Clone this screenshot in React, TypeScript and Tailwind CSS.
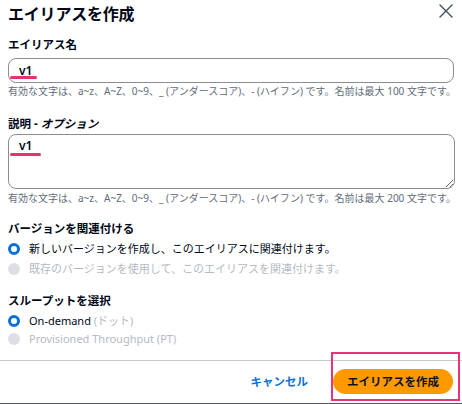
import { X } from "lucide-react";

const font = { fontFamily: '"Noto Sans", "Noto Sans CJK JP", sans-serif' };

function Radio({ checked, disabled }: { checked?: boolean; disabled?: boolean }) {
  if (checked) {
    return <span className="w-[12px] h-[12px] rounded-full border-[3.5px] border-[#0972d3] bg-white shrink-0" />;
  }
  return <span className={`w-[12px] h-[12px] rounded-full shrink-0 ${disabled ? "bg-[#dcdfe4]" : "border border-[#8c8c94]"}`} />;
}

export default function App() {
  return (
    <div
      className="relative w-[462px] h-[404px] bg-white overflow-hidden text-[#000716] border-b border-[#545b64]"
      style={font}
    >
      {/* header */}
      <div className="flex items-start justify-between pl-2 pr-[4px] pt-[4px] h-[24px]">
        <h1 className="text-[16px] leading-[20px] font-bold tracking-[-0.2px]">エイリアスを作成</h1>
        <X size={24} strokeWidth={1.4} className="text-[#414d5c] mt-[-5px]" />
      </div>

      <div className="px-2">
        {/* alias name */}
        <div className="mt-[13px] text-[11.5px] leading-[16px] font-bold">エイリアス名</div>
        <div className="relative mt-[4px]">
          <input
            readOnly
            defaultValue="v1"
            className="w-[446px] h-[25px] rounded-[8px] border border-[#8c8c94] px-[10px] text-[12px] font-semibold outline-none"
          />
          <span className="absolute left-[2px] top-[19px] w-[27px] h-[3px] rounded-full bg-[#e6306f]" />
        </div>
        <p className="mt-[1px] text-[10px] leading-[14px] text-[#5f6b7a] whitespace-nowrap">
          有効な文字は、a~z、A~Z、0~9、_ (アンダースコア)、- (ハイフン) です。名前は最大 100 文字です。
        </p>

        {/* description */}
        <div className="mt-[18px] text-[11.5px] leading-[16px] font-bold">
          説明 - <span className="italic">オプション</span>
        </div>
        <div className="relative mt-[2px]">
          <textarea
            readOnly
            defaultValue="v1"
            className="block w-[447px] h-[55px] rounded-[8px] border border-[#8c8c94] px-[10px] py-[3px] text-[12px] leading-[16px] font-semibold outline-none resize-y"
          />
          <span className="absolute left-[2px] top-[19px] w-[31px] h-[3px] rounded-full bg-[#e6306f]" />
        </div>
        <p className="mt-[2px] text-[10px] leading-[14px] text-[#5f6b7a] whitespace-nowrap">
          有効な文字は、a~z、A~Z、0~9、_ (アンダースコア)、- (ハイフン) です。名前は最大 200 文字です。
        </p>

        {/* version */}
        <div className="mt-[16px] text-[11.5px] leading-[16px] font-bold">バージョンを関連付ける</div>
        <div className="mt-[4px] flex items-center gap-[9px] text-[11px] leading-[16px]">
          <Radio checked />
          <span>新しいバージョンを作成し、このエイリアスに関連付けます。</span>
        </div>
        <div className="mt-[4px] flex items-center gap-[9px] text-[11px] leading-[16px] text-[#b4bac3]">
          <Radio disabled />
          <span>既存のバージョンを使用して、このエイリアスを関連付けます。</span>
        </div>

        {/* throughput */}
        <div className="mt-[16px] text-[11.5px] leading-[16px] font-bold">スループットを選択</div>
        <div className="mt-[4px] flex items-center gap-[9px] text-[11px] leading-[16px]">
          <Radio checked />
          <span>
            On-demand <span className="text-[#b4bac3]">(ドット)</span>
          </span>
        </div>
        <div className="mt-[2px] flex items-center gap-[9px] text-[11px] leading-[16px] text-[#b4bac3]">
          <Radio disabled />
          <span>Provisioned Throughput (PT)</span>
        </div>
      </div>

      {/* footer */}
      <div className="mt-[13px] border-t border-[#c6c6cd] flex justify-end items-center gap-[25px] pr-[9px] pt-[8px]">
        <button className="text-[11.5px] font-bold text-[#0972d3]">キャンセル</button>
        <button className="w-[120px] h-[25px] rounded-full bg-[#ff9900] text-[11.5px] font-bold text-[#0f141a]">
          エイリアスを作成
        </button>
      </div>

      <div className="absolute left-[331px] top-[352px] w-[129px] h-[49px] border-2 border-[#e8357a] pointer-events-none" />
    </div>
  );
}
